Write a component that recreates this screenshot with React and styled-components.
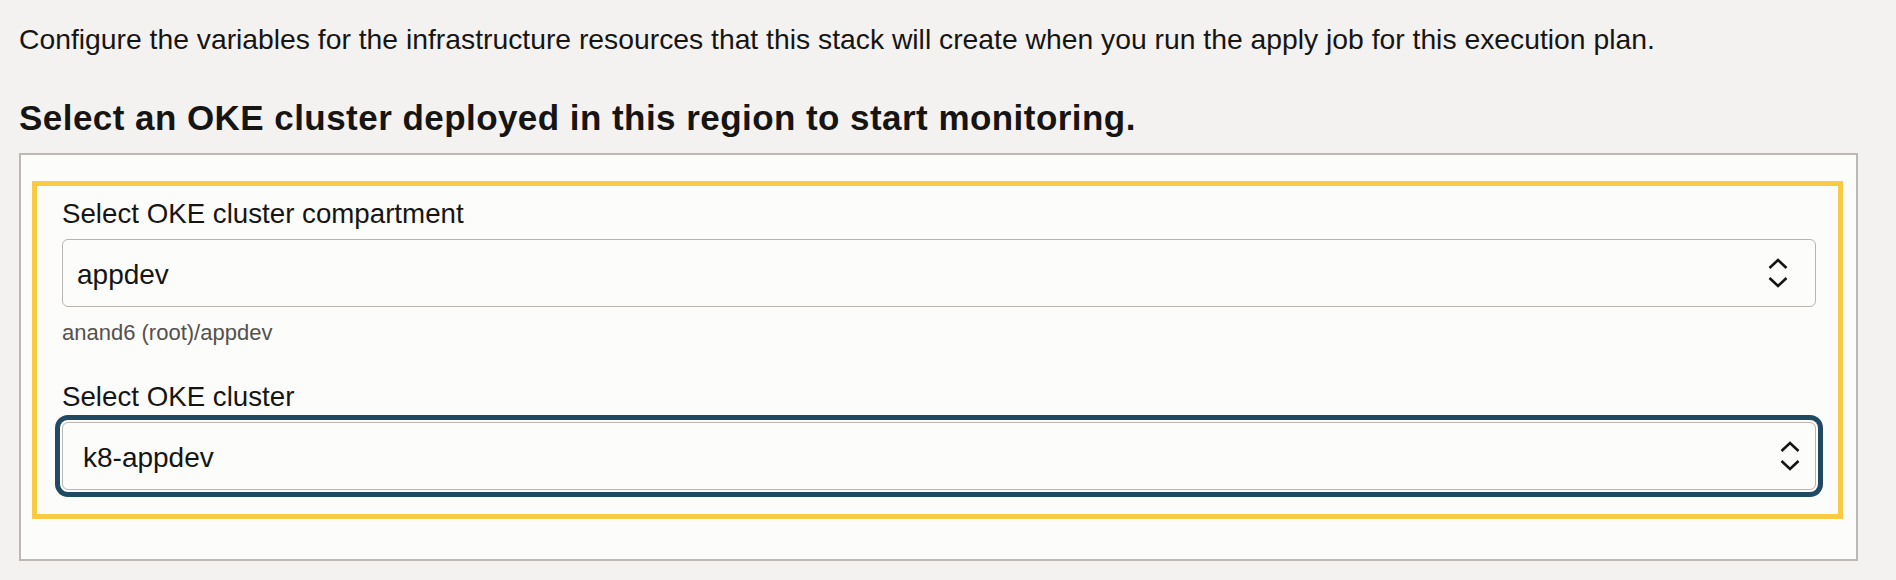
import React from "react";
import styled, { createGlobalStyle } from "styled-components";

const GlobalStyle = createGlobalStyle`
  html, body {
    margin: 0;
    padding: 0;
    background: #f3f2f1;
  }
  body {
    font-family: "Liberation Sans", Arial, Helvetica, sans-serif;
    color: #161513;
  }
`;

const Page = styled.div`
  padding: 21px 38px 0 19px;
  box-sizing: border-box;
  width: 1896px;
`;

const Intro = styled.p`
  margin: 0;
  font-size: 28.3px;
  line-height: 36px;
  color: #161513;
`;

const Heading = styled.h2`
  margin: 39px 0 13px 0;
  font-size: 35px;
  letter-spacing: 0.45px;
  line-height: 44px;
  font-weight: 700;
  color: #161513;
`;

const Panel = styled.section`
  border: 2px solid #bdb8b3;
  background: #fcfcfb;
  padding: 26px 13px 40px 11px;
`;

const Highlight = styled.div`
  border: 5px solid #f9ca46;
  padding: 11px 22px 24px 25px;
  display: flex;
  flex-direction: column;
`;

const Field = styled.div`
  display: flex;
  flex-direction: column;
  margin-top: ${(p) => (p.$first ? "0" : "33px")};
`;

const Label = styled.label`
  font-size: 27.7px;
  line-height: 34px;
  color: #161513;
  margin-bottom: 8px;
`;

const SelectBox = styled.div`
  height: 68px;
  box-sizing: border-box;
  border: 1px solid #bab5b0;
  border-radius: 6px;
  background: #fcfcfb;
  display: flex;
  align-items: center;
  justify-content: space-between;
  padding: 0 ${(p) => p.$padRight}px 0 ${(p) => p.$padLeft}px;
  box-shadow: ${(p) =>
    p.$focused ? "0 0 0 2px #fcfcfb, 0 0 0 7px #1f4a62" : "none"};
`;

const Value = styled.span`
  font-size: 28px;
  line-height: 34px;
  color: #161513;
  padding-top: 3px;
`;

const Hint = styled.div`
  font-size: 22px;
  line-height: 28px;
  color: #53514e;
  margin-top: 12px;
`;

const Chevrons = () => (
  <svg width="20" height="30" viewBox="0 0 20 30" fill="none">
    <path
      d="M1.5 10 L10 2 L18.5 10"
      stroke="#161513"
      strokeWidth="2.6"
      strokeLinecap="butt"
      strokeLinejoin="miter"
    />
    <path
      d="M1.5 20 L10 28 L18.5 20"
      stroke="#161513"
      strokeWidth="2.6"
      strokeLinecap="butt"
      strokeLinejoin="miter"
    />
  </svg>
);

export default function App() {
  return (
    <>
      <GlobalStyle />
      <Page>
        <Intro>
          Configure the variables for the infrastructure resources that this
          stack will create when you run the apply job for this execution plan.
        </Intro>
        <Heading>
          Select an OKE cluster deployed in this region to start monitoring.
        </Heading>
        <Panel>
          <Highlight>
            <Field $first>
              <Label>Select OKE cluster compartment</Label>
              <SelectBox $padLeft={14} $padRight={27}>
                <Value>appdev</Value>
                <Chevrons />
              </SelectBox>
              <Hint>anand6 (root)/appdev</Hint>
            </Field>
            <Field>
              <Label>Select OKE cluster</Label>
              <SelectBox $focused $padLeft={20} $padRight={15}>
                <Value>k8-appdev</Value>
                <Chevrons />
              </SelectBox>
            </Field>
          </Highlight>
        </Panel>
      </Page>
    </>
  );
}
